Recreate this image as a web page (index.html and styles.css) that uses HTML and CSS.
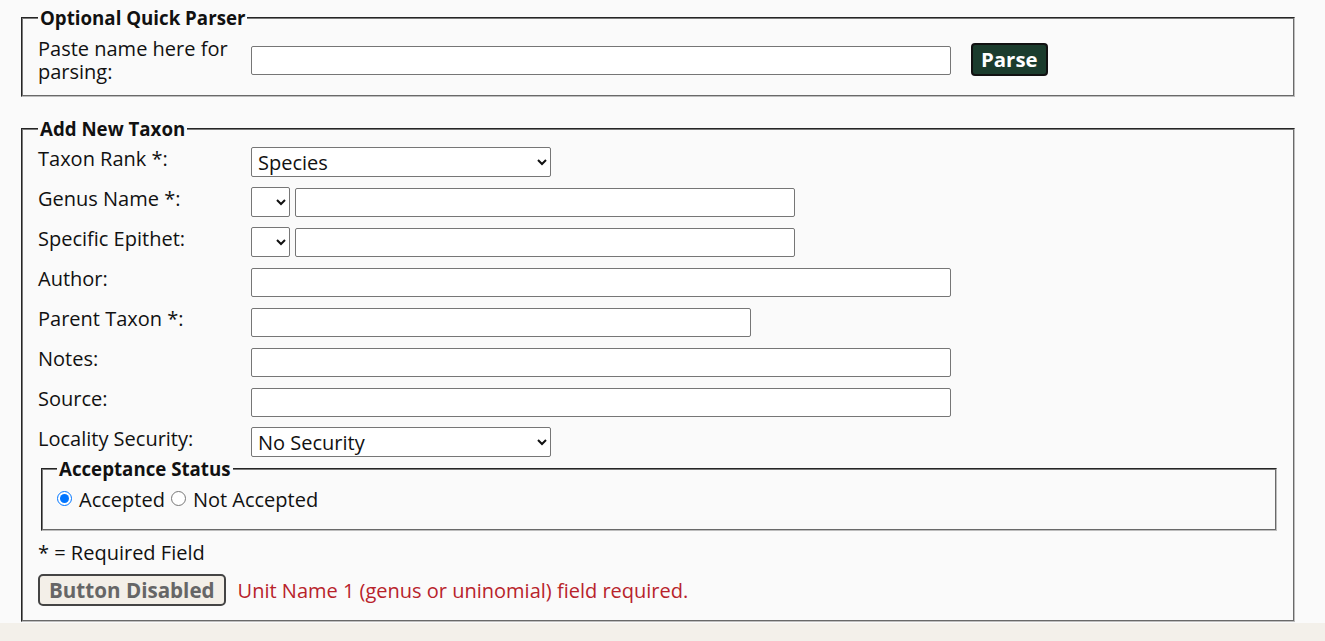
FILE: index.html
```html
<!DOCTYPE html>
<html>
<head>
<meta charset="utf-8">
<link rel="stylesheet" href="styles.css">
</head>
<body>
<div class="page">
  <fieldset class="box parser">
    <legend>Optional Quick Parser</legend>
    <div class="parser-row">
      <label class="lbl" for="quick">Paste name here for parsing:</label>
      <input id="quick" class="inp w700" type="text">
      <button class="parse-btn" type="button">Parse</button>
    </div>
  </fieldset>

  <fieldset class="box taxon">
    <legend>Add New Taxon</legend>
    <div class="form-grid">
      <label class="lbl">Taxon Rank *:</label>
      <div class="ctl"><select class="sel w300"><option>Species</option></select></div>

      <label class="lbl">Genus Name *:</label>
      <div class="ctl"><select class="sel small"><option></option></select><input class="inp w500" type="text"></div>

      <label class="lbl">Specific Epithet:</label>
      <div class="ctl"><select class="sel small"><option></option></select><input class="inp w500" type="text"></div>

      <label class="lbl">Author:</label>
      <div class="ctl"><input class="inp w700" type="text"></div>

      <label class="lbl">Parent Taxon *:</label>
      <div class="ctl"><input class="inp w500" type="text"></div>

      <label class="lbl">Notes:</label>
      <div class="ctl"><input class="inp w700" type="text"></div>

      <label class="lbl">Source:</label>
      <div class="ctl"><input class="inp w700" type="text"></div>

      <label class="lbl">Locality Security:</label>
      <div class="ctl"><select class="sel w300"><option>No Security</option></select></div>
    </div>

    <fieldset class="box status">
      <legend>Acceptance Status</legend>
      <div class="radios">
        <label class="radio"><input type="radio" name="acc" checked> Accepted</label>
        <label class="radio"><input type="radio" name="acc"> Not Accepted</label>
      </div>
    </fieldset>

    <div class="req">* = Required Field</div>
    <div class="submit-row">
      <button class="disabled-btn" type="button" disabled>Button Disabled</button>
      <span class="err">Unit Name 1 (genus or uninomial) field required.</span>
    </div>
  </fieldset>
</div>
</body>
</html>
```

FILE: styles.css
```css
html, body {
  margin: 0;
  padding: 0;
}
body {
  background: #f3f0ea;
  font-family: "Open Sans", "Liberation Sans", sans-serif;
  font-size: 20px;
  color: #111;
}
.page {
  background: #fafafa;
  padding: 7px 30px 1px 21px;
}
.box {
  border: 2px groove #e4e4e4;
  border-color: #7a7a7a #bdbdbd #bdbdbd #7a7a7a;
  margin: 0;
  min-width: 0;
}
.box legend {
  font-weight: bold;
  font-size: 18.7px;
  padding: 0 2px;
  line-height: 22px;
}
.parser {
  padding: 8px 14px 12px 15px;
}
.parser-row {
  display: flex;
  align-items: center;
}
.lbl {
  line-height: 23px;
}
.parser-row .lbl {
  width: 213px;
  flex: none;
}
.inp {
  box-sizing: border-box;
  height: 29px;
  border: 1px solid #767676;
  border-radius: 2px;
  background: #fff;
  margin: 0;
  font: inherit;
  padding: 0 4px;
}
.w700 { width: 700px; }
.w500 { width: 500px; }
.w300 { width: 300px; }
.sel {
  box-sizing: border-box;
  height: 30px;
  border: 1px solid #767676;
  border-radius: 2px;
  background: #fff;
  margin: 0;
  font: inherit;
  color: #111;
  padding: 0 2px;
}
.sel.small {
  width: 39px;
  margin-right: 5px;
}
.parse-btn {
  margin-left: 20px;
  margin-top: -2px;
  height: 33px;
  padding: 0 8px;
  background: #1b3c2d;
  color: #fff;
  border: 2px solid #111;
  border-radius: 4px;
  font: inherit;
  font-weight: bold;
  font-size: 20.4px;
}
.taxon {
  margin-top: 21px;
  padding: 7px 15px 14px 15px;
}
.form-grid {
  display: grid;
  grid-template-columns: 213px 1fr;
  row-gap: 10px;
}
.ctl {
  display: flex;
  align-items: center;
  height: 30px;
}
.form-grid .lbl {
  line-height: 24px;
}
.status {
  margin: 1px 1px 0 3px;
  padding: 6px 15px 16px 14px;
}
.radios {
  display: flex;
  align-items: center;
  gap: 6px;
  line-height: 27px;
}
.radio {
  display: inline-flex;
  align-items: center;
}
.radio input {
  margin: 0 7px 2px 0;
  width: 15px;
  height: 15px;
}
.req {
  margin-top: 8px;
  line-height: 27px;
}
.submit-row {
  margin-top: 8px;
  display: flex;
  align-items: center;
}
.disabled-btn {
  height: 32px;
  padding: 0 9px;
  background: #f3efe8;
  color: #666;
  border: 2px solid #444;
  border-radius: 5px;
  font: inherit;
  font-weight: bold;
  font-size: 20.6px;
}
.err {
  margin-left: 12px;
  color: #b8232b;
}
```
